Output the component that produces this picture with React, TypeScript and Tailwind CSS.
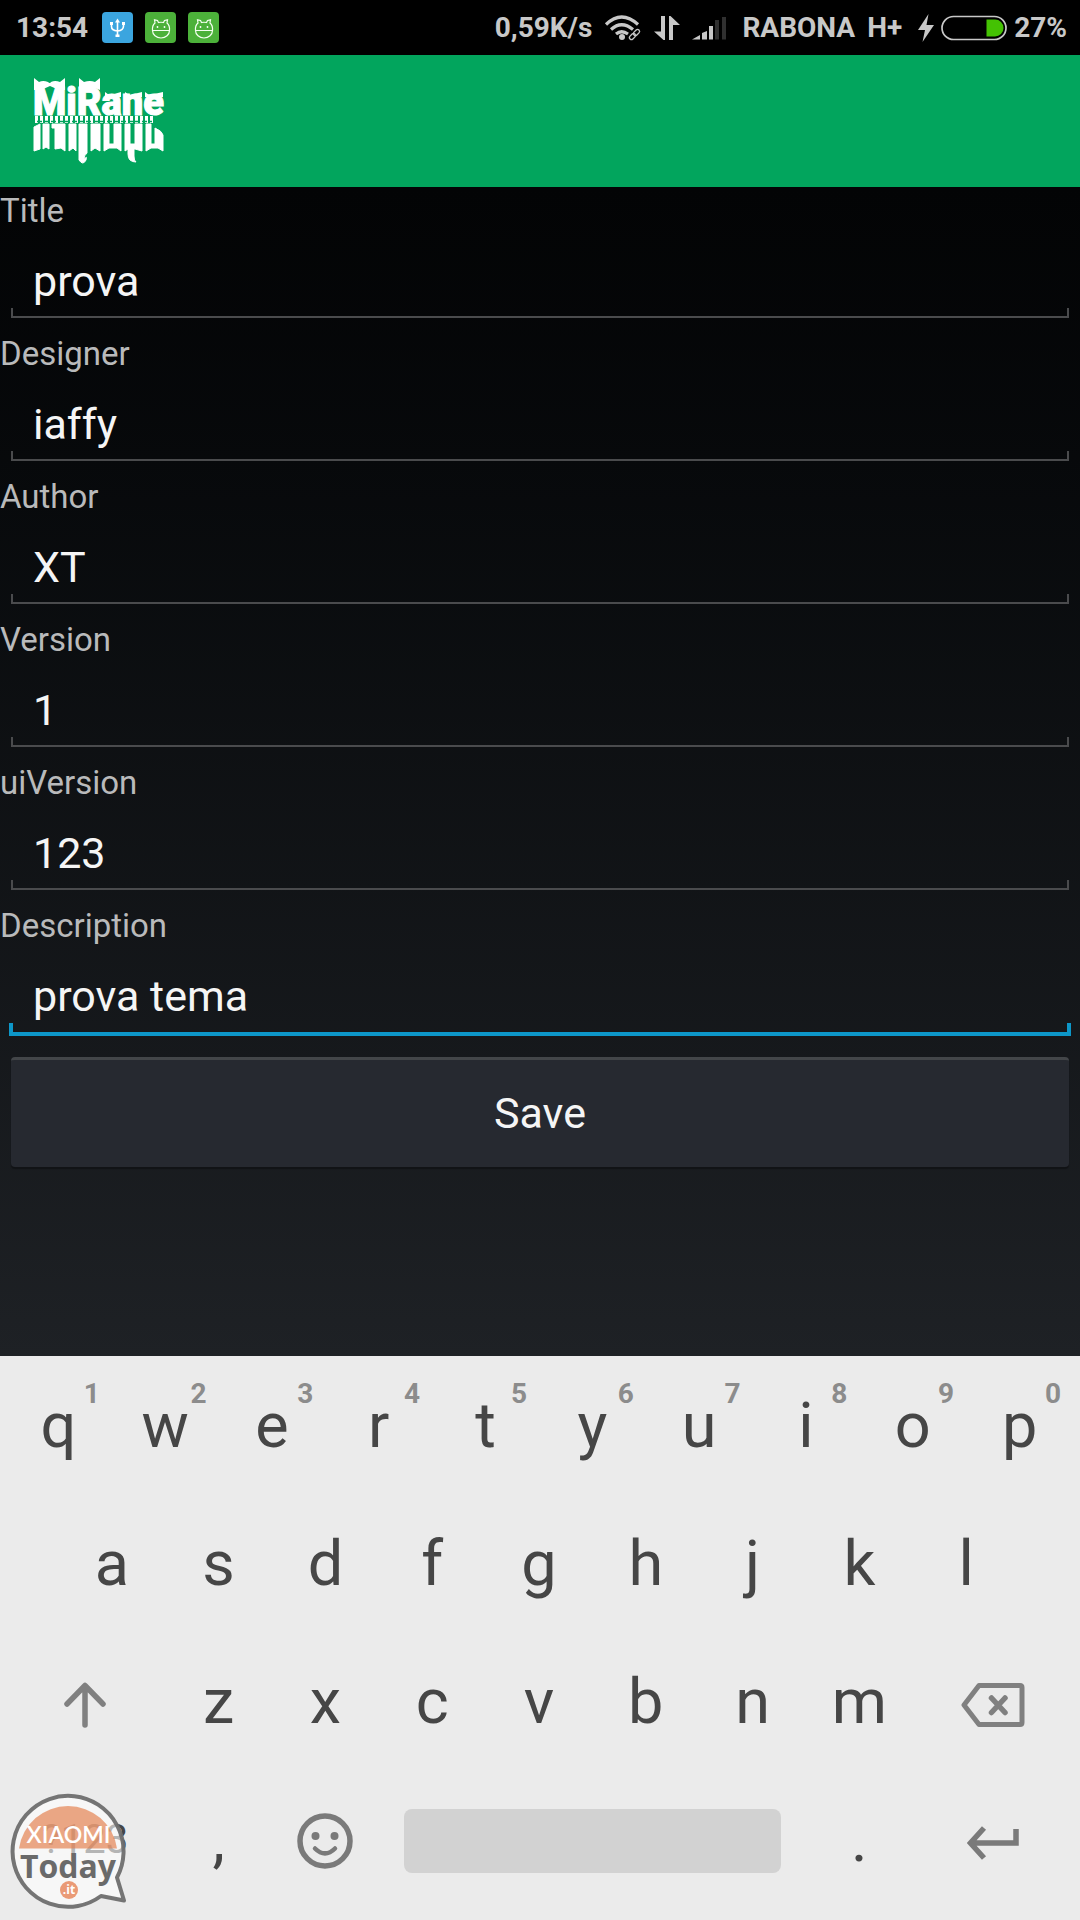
import React from 'react';
import { clsx } from 'clsx';

const FIELDS = [
  { id: 'title', label: 'Title', value: 'prova' },
  { id: 'designer', label: 'Designer', value: 'iaffy' },
  { id: 'author', label: 'Author', value: 'XT' },
  { id: 'version', label: 'Version', value: '1' },
  { id: 'uiVersion', label: 'uiVersion', value: '123' },
  { id: 'description', label: 'Description', value: 'prova tema', active: true },
];

const UsbBadge = () => (
  <svg className="size-[31px]" viewBox="0 0 31 31" fill="none" stroke="#fff" strokeWidth="1.6">
    <rect width="31" height="31" rx="4" fill="#3ba5df" stroke="none" />
    <path d="M15.500 9v14M9.500 11.500v3q0 4 6 4.500q6-.5 6-5v-2.500" />
    <path d="M13 10.500 15.500 6.500 18 10.500z" fill="#fff" stroke="none" />
    <path d="M8 10h3v3H8zM20 10h3v3h-3zM13.500 22.500h4v2.500h-4z" fill="#fff" stroke="none" />
  </svg>
);

const BunnyBadge = () => (
  <svg className="size-[31px]" viewBox="0 0 31 31" fill="none" stroke="#f4fff0" strokeWidth="1.200">
    <rect width="31" height="31" rx="4" fill="#4cb13a" stroke="none" />
    <path d="M7.500 18.500h17a8.500 7.500 0 0 1-17 0zM7.500 18.500q-.5-5 2.500-7.500L9.500 7.800l3 .7L13.500 10.500q2.500-.5 5 0l1-2 3-.7L22 11q3 2.500 2.500 7.500z" />
    <circle cx="12.500" cy="15" r=".9" fill="#fff" stroke="none" />
    <circle cx="19.500" cy="15" r=".9" fill="#fff" stroke="none" />
  </svg>
);

const WifiIcon = () => (
  <svg className="h-7 w-[38px]" viewBox="0 0 38 28" fill="none" stroke="#c8c8c8" strokeWidth="3.200">
    <path d="M2 10.500Q17.500-4.500 34 10.500M7 15.500q10.500-9.500 22 0M12 20q5.500-4.500 12 0" />
    <circle cx="18" cy="23" r="3" fill="#c8c8c8" stroke="none" />
    <path d="M27 25l7-8" stroke="#000" strokeWidth="4" />
    <g strokeWidth="1.300">
      <rect x="25" y="20.500" width="7" height="4" rx="2" transform="rotate(-45 28.500 22.500)" />
      <rect x="29" y="16.500" width="7" height="4" rx="2" transform="rotate(-45 32.500 18.500)" />
    </g>
  </svg>
);

const TransferIcon = () => (
  <svg className="h-6 w-[26px]" viewBox="0 0 26 24" fill="#c8c8c8">
    <path d="M7 0h4v24H9.500L0 15.500h7zM15 24h4V9h7L16.500 0H15z" />
  </svg>
);

const SignalIcon = () => (
  <svg className="h-6 w-[34px]" viewBox="0 0 34 24" fill="#c8c8c8">
    <path d="M0 23.500 8 19v4.500zM10 17l5-2v8.500h-5zM17 10h4v13.500h-4z" />
    <path d="M23 4h4v19.500h-4zM30 1h4v22.500h-4z" fill="#303030" />
  </svg>
);

const BoltIcon = () => (
  <svg className="h-7 w-4" viewBox="0 0 16 28" fill="#c8c8c8">
    <path d="M10.500 0 0 16h7L4.500 28 16 11H8.500z" />
  </svg>
);

const BatteryIcon = () => (
  <svg className="h-[26px] w-[66px]" viewBox="0 0 66 26">
    <rect x="1" y="1.500" width="64" height="23" rx="11.500" fill="#000" stroke="#c8c8c8" strokeWidth="1.700" />
    <path d="M45.500 4.500H54a8.500 8.500 0 0 1 0 17h-8.500z" fill="#44c203" />
  </svg>
);

// Wordmark on top, zip and the hanging lower half underneath
const Logo = () => (
  <svg className="h-[88px] w-[132px]" viewBox="0 0 132 88" fill="#fff" role="img" aria-label="MiRane">
    <text x="0" y="38" fontSize="38" fontWeight="900" fontFamily="Roboto, sans-serif" stroke="#fff" strokeWidth="1">
      MiRane
    </text>
    <path d="M1 13V1l5 4q4-2 9 0 2 2 3 0 4-2 9 0l5-4v12h-6l-9-4-9 4zM46 13V1l5 4q6-2 11 0l5-4v12l-5-2z" />
    <path d="M72 20V15q4 4 9 2l7-2v5zM92 20V15q4 4 9 2l8-2v5zM112 20V15q4 4 9 2l9-2v5z" />
    <path d="M2 42.500h118" stroke="#fff" strokeWidth="7" strokeDasharray="3 2" />
    <path d="M4 44.500h115" stroke="#02a55d" strokeWidth="1.500" strokeDasharray="5 2" />
    <path
      stroke="#fff"
      d="M1 50l6-3v25l-6 2zM10 47h6v25l-3-2-3 2zM19 47h13v27l-4-3-6 1v-21h-3zM36 47h7v27l-3-3-4 3zM46 47h8v29q-4 3-2 6 2-4 1 1-3 6-7 0zM58 47h9v27l-5-3-4 3zM71 47h5v20h5V47h7v27l-4-3h-8l-5 3zM92 47h5v20h5V47h7v27l-7-2h-1v7q0 5 2 6-8 0-8-8v-5l-3 2zM113 47h5v20h4V51q7 3 8 7v16l-5-3h-7l-5 3z"
    />
  </svg>
);

const StatusBar = () => (
  <div className="flex h-[55px] items-center justify-between bg-black pl-4 pr-[13px] text-[28px] font-bold leading-8 text-[#c8c8c8]">
    <div className="flex items-center gap-3">
      <span className="mr-0.5">13:54</span>
      <UsbBadge />
      <BunnyBadge />
      <BunnyBadge />
    </div>
    <div className="flex items-center gap-3">
      <span>0,59K/s</span>
      <WifiIcon />
      <TransferIcon />
      <SignalIcon />
      <span className="ml-1">RABONA</span>
      <span>H+</span>
      <span className="ml-1 flex items-center gap-[7px]">
        <BoltIcon />
        <BatteryIcon />
        <span>27%</span>
      </span>
    </div>
  </div>
);

interface FieldProps {
  id: string;
  label: string;
  value: string;
  active?: boolean;
}

const Field: React.FC<FieldProps> = ({ id, label, value, active }) => {
  return (
    <div>
      <label htmlFor={id} className="block h-12 text-[33px] leading-[48px] text-[#b9babb]">
        {label}
      </label>
      <input
        id={id}
        type="text"
        defaultValue={value}
        className="mt-5 block h-[53px] w-full bg-transparent px-[33px] text-[43px] leading-[53px] text-[#f5f5f5] outline-none"
      />
      <div
        className={clsx(
          active
            ? 'mx-[9px] mb-[21px] h-[13px] border-x-4 border-b-4 border-[#0d97c9]'
            : 'mx-[11px] mb-3 h-[10px] border-x-2 border-b-2 border-[#4a4b4d]'
        )}
      />
    </div>
  );
};

const LetterKey = ({ letter, hint, first }: { letter: string; hint?: string; first?: boolean }) => (
  <button type="button" className={clsx('relative col-span-2 h-[138px] text-center', first && 'col-start-2')}>
    {letter}
    {hint && (
      <span className="absolute right-3 top-[23px] text-[28px] font-bold leading-7 text-[#8c8c8c]">{hint}</span>
    )}
  </button>
);

const Keyboard = () => (
  <div className="relative bg-[#ebebeb] pb-[11px] pl-[5px] pr-[7px] pt-px text-[63px] leading-[138px] text-[#464646]">
    <div className="grid grid-cols-20">
      {'qwertyuiop'.split('').map((letter, i) => (
        <LetterKey key={letter} letter={letter} hint={String((i + 1) % 10)} />
      ))}
    </div>
    <div className="grid grid-cols-20">
      {'asdfghjkl'.split('').map((letter, i) => (
        <LetterKey key={letter} letter={letter} first={i === 0} />
      ))}
    </div>
    <div className="grid grid-cols-20">
      <button type="button" aria-label="Shift" className="col-span-3 flex items-center justify-center pt-1.5">
        <svg className="h-[46px] w-[42px]" viewBox="0 0 42 46" fill="none" stroke="#808080" strokeWidth="5.500" strokeLinecap="round" strokeLinejoin="round">
          <path d="M21 43V4M3 22 21 3.500 39 22" />
        </svg>
      </button>
      {'zxcvbnm'.split('').map((letter) => (
        <LetterKey key={letter} letter={letter} />
      ))}
      <button type="button" aria-label="Backspace" className="col-span-3 flex items-center justify-center pt-1.5">
        <svg className="h-[46px] w-16" viewBox="0 0 64 46" fill="none" stroke="#808080" strokeWidth="5" strokeLinecap="round" strokeLinejoin="round">
          <path d="M18 3.500h41q2 0 2 2v35q0 2-2 2H18L3 23z" />
          <path d="M30.500 16 44 30.500M44 16 30.500 30.500" strokeWidth="5.500" />
        </svg>
      </button>
    </div>
    <div className="grid grid-cols-20">
      <button type="button" className="col-span-3 h-[138px] text-center text-[40px]">
        ?123
      </button>
      <LetterKey letter="," />
      <button type="button" aria-label="Emoji" className="col-span-2 flex items-center justify-center pt-0.5">
        <svg className="size-14" viewBox="0 0 56 56" fill="none" stroke="#7a7a7a" strokeWidth="5.500">
          <circle cx="28" cy="28" r="25" />
          <circle cx="18.500" cy="23" r="4" fill="#7a7a7a" stroke="none" />
          <circle cx="37.500" cy="23" r="4" fill="#7a7a7a" stroke="none" />
          <path d="M18 35.500q10 10 20 0" strokeWidth="4.500" strokeLinecap="round" />
        </svg>
      </button>
      <button type="button" aria-label="Space" className="col-span-8 flex items-center px-[25px] pt-0.5">
        <span className="h-16 w-full rounded-lg bg-[#d2d2d2]" />
      </button>
      <LetterKey letter="." />
      <button type="button" aria-label="Enter" className="col-span-3 flex items-center justify-center pt-1.5">
        <svg className="h-[34px] w-[52px]" viewBox="0 0 52 34" fill="none" stroke="#7a7a7a" strokeWidth="5.500">
          <path d="M17 2 3.500 17 17 32M4 17H49V3" />
        </svg>
      </button>
    </div>
    <Watermark />
  </div>
);

const Watermark = () => (
  <svg className="pointer-events-none absolute bottom-[11px] left-[9px] h-[118px] w-[120px]" viewBox="0 0 120 118" role="img" aria-label="Xiaomi Today .it">
    <path
      d="M108 86.500A55.500 55.500 0 1 0 92 105L115 109.500z"
      fill="#fff"
      fillOpacity=".6"
      stroke="#6e6e6e"
      strokeWidth="4"
      strokeLinejoin="round"
      strokeOpacity=".95"
    />
    <path d="M10 57.500a49.500 49.500 0 0 1 98 0z" fill="#e47d49" fillOpacity=".66" />
    <text x="59.500" y="52" textAnchor="middle" fontSize="23" fontWeight="600" fontFamily="Lato, sans-serif" fill="#fff">
      XIAOMI
    </text>
    <text x="59" y="87" textAnchor="middle" fontSize="32" fontWeight="700" fontFamily="'Open Sans', sans-serif" fill="#6a6a6a">
      Today
    </text>
    <circle cx="60" cy="99" r="9" fill="#ea9a76" />
    <text x="60" y="103" textAnchor="middle" fontSize="12" fontWeight="700" fontFamily="'Open Sans', sans-serif" fill="#fff">
      .it
    </text>
  </svg>
);

export default function App() {
  return (
    <div className="flex min-h-screen flex-col font-[Roboto,sans-serif]">
      <StatusBar />
      <header className="flex h-[132px] items-center bg-[#02a55d] px-[33px]">
        <Logo />
      </header>
      <form className="flex-1 bg-linear-to-b from-[#030405] to-[#1e2125]" onSubmit={(e) => e.preventDefault()}>
        {FIELDS.map((field) => (
          <Field key={field.id} {...field} />
        ))}
        <div className="px-[11px]">
          <button
            type="submit"
            className="block h-[110px] w-full rounded-sm border-t-3 border-[#434649] bg-[#262930] pb-0.5 text-[43px] leading-[50px] text-[#f5f5f5] shadow-[0_2px_1px_#111316]"
          >
            Save
          </button>
        </div>
      </form>
      <Keyboard />
    </div>
  );
}
